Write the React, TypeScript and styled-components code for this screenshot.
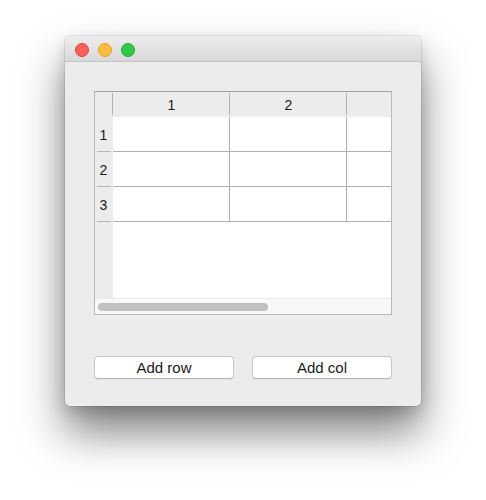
import React from "react";
import styled, { createGlobalStyle } from "styled-components";

const Global = createGlobalStyle`
  html, body { margin: 0; padding: 0; background: #ffffff; }
  body { font-family: "Liberation Sans", Arial, sans-serif; }
`;

const Page = styled.div`
  width: 486px;
  height: 500px;
  padding: 36px 0 0 65px;
  box-sizing: border-box;
`;

const Window = styled.div`
  width: 356px;
  height: 370px;
  background: #ececec;
  border-radius: 5px;
  box-shadow: 0 0 0 1px rgba(0, 0, 0, 0.08), 0 26px 44px rgba(0, 0, 0, 0.5),
    0 6px 14px rgba(0, 0, 0, 0.14);
  display: flex;
  flex-direction: column;
  overflow: hidden;
`;

const TitleBar = styled.div`
  height: 26px;
  box-sizing: border-box;
  background: linear-gradient(#ededed, #d8d8d8);
  border-bottom: 1px solid #c3c3c3;
  display: flex;
  align-items: center;
  gap: 9px;
  padding: 3px 0 0 10px;
`;

const Light = styled.span<{ $fill: string; $edge: string }>`
  width: 14px;
  height: 14px;
  border-radius: 50%;
  box-sizing: border-box;
  background: ${(p) => p.$fill};
  border: 1px solid ${(p) => p.$edge};
`;

const Content = styled.div`
  flex: 1;
  display: flex;
  flex-direction: column;
  padding: 29px 29px 27px 29px;
`;

const Frame = styled.div`
  height: 224px;
  box-sizing: border-box;
  border: 1px solid #b9b9b9;
  border-top-color: #a2a2a2;
  background: #ffffff;
  display: flex;
  flex-direction: column;
  overflow: hidden;
`;

const HeaderRow = styled.div`
  height: 25px;
  flex-shrink: 0;
  display: flex;
  background: #ececec;
`;

const HeaderCell = styled.div<{ $w?: number }>`
  position: relative;
  width: ${(p) => (p.$w ? `${p.$w}px` : "auto")};
  flex: ${(p) => (p.$w ? "0 0 auto" : "1")};
  display: flex;
  align-items: center;
  justify-content: center;
  font-size: 14px;
  color: #1a1a1a;
  &::after {
    content: "";
    position: absolute;
    right: 0;
    top: 1px;
    bottom: 2px;
    width: 1px;
    background: #b3b3b3;
  }
  &:last-child::after { display: none; }
`;

const Body = styled.div`
  flex: 1;
  display: flex;
  min-height: 0;
`;

const RowHeaders = styled.div`
  width: 18px;
  background: #ececec;
  display: flex;
  flex-direction: column;
`;

const RowHeader = styled.div`
  position: relative;
  height: 35px;
  display: flex;
  align-items: center;
  justify-content: center;
  font-size: 14px;
  color: #1a1a1a;
  padding-right: 1px;
  &::after {
    content: "";
    position: absolute;
    left: 2px;
    right: 2px;
    bottom: 0;
    height: 1px;
    background: #b8b8b8;
  }
`;

const Cells = styled.div`
  flex: 1;
  display: flex;
  flex-direction: column;
  background: #fff;
  overflow: hidden;
`;

const GridRow = styled.div`
  display: flex;
  height: 35px;
  box-sizing: border-box;
  border-bottom: 1px solid #b0b0b0;
`;

const Cell = styled.div<{ $w?: number }>`
  width: ${(p) => (p.$w ? `${p.$w}px` : "auto")};
  flex: ${(p) => (p.$w ? "0 0 auto" : "1")};
  box-sizing: border-box;
  border-right: 1px solid #b0b0b0;
  &:last-child { border-right: none; }
`;

const ScrollTrack = styled.div`
  height: 16px;
  flex-shrink: 0;
  box-sizing: border-box;
  background: #f8f8f8;
  border-top: 1px solid #ebebeb;
  display: flex;
  align-items: center;
  padding-left: 3px;
`;

const Thumb = styled.div`
  width: 170px;
  height: 8px;
  border-radius: 4px;
  background: #c1c1c1;
`;

const Spacer = styled.div`
  flex: 1;
`;

const Buttons = styled.div`
  display: flex;
  gap: 18px;
`;

const Button = styled.button`
  width: 140px;
  height: 23px;
  box-sizing: border-box;
  background: #ffffff;
  border: 1px solid #c8c8c8;
  border-bottom-color: #b5b5b5;
  border-radius: 4px;
  font-family: "Liberation Sans", Arial, sans-serif;
  font-size: 15px;
  color: #1a1a1a;
  padding: 0;
  box-shadow: 0 1px 0 rgba(0, 0, 0, 0.04);
`;

const rows = [1, 2, 3];

export default function App() {
  return (
    <>
      <Global />
      <Page>
        <Window>
          <TitleBar>
            <Light $fill="#fc605c" $edge="#e0443e" />
            <Light $fill="#fdbc40" $edge="#dea123" />
            <Light $fill="#34c84a" $edge="#1aab29" />
          </TitleBar>
          <Content>
            <Frame>
              <HeaderRow>
                <HeaderCell $w={18} />
                <HeaderCell $w={117}>1</HeaderCell>
                <HeaderCell $w={117}>2</HeaderCell>
                <HeaderCell />
              </HeaderRow>
              <Body>
                <RowHeaders>
                  {rows.map((r) => (
                    <RowHeader key={r}>{r}</RowHeader>
                  ))}
                </RowHeaders>
                <Cells>
                  {rows.map((r) => (
                    <GridRow key={r}>
                      <Cell $w={117} />
                      <Cell $w={117} />
                      <Cell />
                    </GridRow>
                  ))}
                </Cells>
              </Body>
              <ScrollTrack>
                <Thumb />
              </ScrollTrack>
            </Frame>
            <Spacer />
            <Buttons>
              <Button>Add row</Button>
              <Button>Add col</Button>
            </Buttons>
          </Content>
        </Window>
      </Page>
    </>
  );
}
